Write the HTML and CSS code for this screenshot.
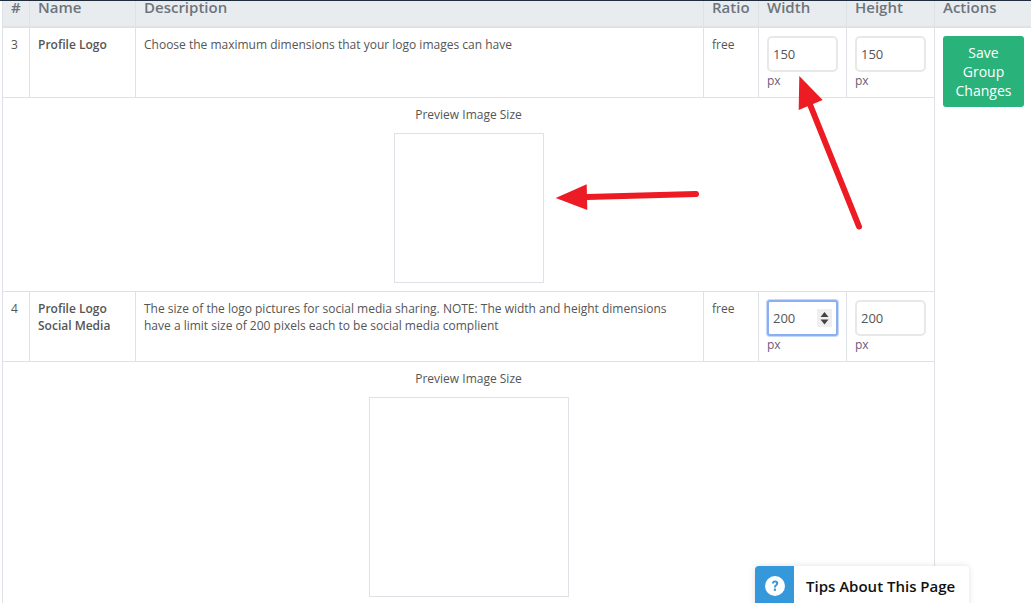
FILE: index.html
```html
<!DOCTYPE html>
<html lang="en">
<head>
<meta charset="utf-8">
<title>Image Sizes</title>
<link rel="stylesheet" href="styles.css">
</head>
<body>
<div class="page">
  <table class="sizes">
    <colgroup>
      <col class="c-num"><col class="c-name"><col class="c-desc"><col class="c-ratio"><col class="c-dim"><col class="c-dim"><col class="c-act">
    </colgroup>
    <thead>
      <tr>
        <th>#</th><th>Name</th><th>Description</th><th>Ratio</th><th>Width</th><th>Height</th><th class="act-head">Actions</th>
      </tr>
    </thead>
    <tbody>
      <tr class="row">
        <td>3</td>
        <td class="name">Profile Logo</td>
        <td>Choose the maximum dimensions that your logo images can have</td>
        <td>free</td>
        <td class="dim"><div class="field">150</div><div class="unit">px</div></td>
        <td class="dim"><div class="field">150</div><div class="unit">px</div></td>
        <td class="actions" rowspan="4"><button class="save">Save Group Changes</button></td>
      </tr>
      <tr>
        <td class="preview preview-a" colspan="6">
          <div class="preview-label">Preview Image Size</div>
          <div class="box box-a"></div>
        </td>
      </tr>
      <tr class="row">
        <td>4</td>
        <td class="name">Profile Logo Social Media</td>
        <td>The size of the logo pictures for social media sharing. NOTE: The width and height dimensions have a limit size of 200 pixels each to be social media complient</td>
        <td>free</td>
        <td class="dim">
          <div class="field focus">200
            <svg class="spin" width="15" height="18" viewBox="0 0 15 18"><rect width="15" height="18" fill="#efefef"/><path d="M7.5 3 L11.5 8 H3.5 Z M3.5 10.5 H11.5 L7.5 15.5 Z" fill="#444"/></svg>
          </div>
          <div class="unit">px</div>
        </td>
        <td class="dim"><div class="field">200</div><div class="unit">px</div></td>
      </tr>
      <tr>
        <td class="preview" colspan="6">
          <div class="preview-label">Preview Image Size</div>
          <div class="box box-b"></div>
        </td>
      </tr>
    </tbody>
  </table>
</div>

<svg class="arrows" width="1031" height="603" viewBox="0 0 1031 603">
  <path d="M587 197 L696 194" stroke="#ed1c24" stroke-width="6" stroke-linecap="round" fill="none"/>
  <path d="M555.7 198 L586.7 184.3 L587.3 210 Z" fill="#ed1c24"/>
  <path d="M809 102 L859 226.5" stroke="#ed1c24" stroke-width="6" stroke-linecap="round" fill="none"/>
  <path d="M799.3 76 L822.7 100 L798.7 110 Z" fill="#ed1c24"/>
</svg>

<div class="tips">
  <div class="tips-icon">
    <svg width="20" height="20" viewBox="0 0 20 20"><circle cx="10" cy="10" r="10" fill="#fff"/><path d="M6.9 7.6 C6.9 5.7 8.3 4.6 10.1 4.6 C12 4.6 13.3 5.7 13.3 7.3 C13.3 9.6 10.9 9.6 10.9 11.6 H8.9 C8.9 8.9 11.1 8.7 11.1 7.4 C11.1 6.8 10.7 6.4 10 6.4 C9.3 6.4 8.9 6.9 8.9 7.6 Z" fill="#3498db"/><rect x="8.8" y="12.6" width="2.2" height="2.2" fill="#3498db"/></svg>
  </div>
  <div class="tips-text">Tips About This Page</div>
</div>
</body>
</html>
```
FILE: styles.css
```css
html, body {
  margin: 0;
  padding: 0;
  height: 603px;
  overflow: hidden;
  background: #fff;
}

body {
  font-family: "Open Sans", sans-serif;
  font-size: 12px;
  line-height: 17px;
  color: #555;
  position: relative;
  border-top: 1px solid #1f2d3d;
  box-sizing: border-box;
}

.page {
  padding-left: 2px;
}

.sizes {
  width: 1029px;
  table-layout: fixed;
  border-collapse: collapse;
}

.c-num { width: 27px; }
.c-name { width: 106px; }
.c-desc { width: 568px; }
.c-ratio { width: 55px; }
.c-dim { width: 88px; }
.c-act { width: 97px; }

.sizes th {
  height: 13px;
  padding: 0 8px 12px;
  background: #e9ecef;
  color: #6c757d;
  font-size: 15px;
  font-weight: 600;
  line-height: 13px;
  text-align: left;
  border: 1px solid #dee2e6;
  border-top: 0;
  border-bottom: 2px solid #dee2e6;
  vertical-align: bottom;
}

.sizes td {
  padding: 8px;
  border: 1px solid #dee2e6;
  vertical-align: top;
}

.sizes th.act-head {
  border-right: 0;
}

.sizes td.actions {
  border-right: 0;
  border-bottom: 0;
}

.row {
  height: 70px;
}

.name {
  font-weight: 600;
}

.sizes td.dim {
  padding: 8px 8px 0;
}

.field {
  position: relative;
  box-sizing: border-box;
  width: 71px;
  height: 36px;
  padding-left: 4px;
  border: 2px solid #e8e8e8;
  border-radius: 5px;
  font-size: 13px;
  line-height: 32px;
  color: #555;
  background: #fff;
}

.focus {
  border-color: #8ab0f2;
  border-radius: 3px;
  box-shadow: 0 0 0 1px #c5d8f8;
}

.spin {
  position: absolute;
  right: 4px;
  top: 7px;
}

.unit {
  margin-top: 1px;
  color: #6b5a78;
  line-height: 16px;
}

.sizes td.preview {
  padding: 8px 8px 8px;
  height: 177px;
  text-align: center;
}

.preview-label {
  margin-bottom: 10px;
}

.box {
  display: block;
  margin: 0 auto;
  box-sizing: border-box;
  border: 1px solid #dee2e6;
}

.box-a {
  width: 150px;
  height: 150px;
}

.box-b {
  width: 200px;
  height: 200px;
}

.save {
  display: block;
  box-sizing: border-box;
  width: 81px;
  height: 71px;
  padding: 6px 8px;
  border: 0;
  border-radius: 3px;
  background: #2ab27b;
  color: #fff;
  font-family: "Open Sans", sans-serif;
  font-size: 14px;
  line-height: 19px;
  text-align: center;
}

.arrows {
  position: absolute;
  left: 0;
  top: -1px;
  pointer-events: none;
}

.tips {
  position: absolute;
  left: 755px;
  top: 565px;
  width: 214px;
  height: 50px;
  display: flex;
  border-radius: 4px;
  background: #fff;
  overflow: hidden;
  box-shadow: 0 0 6px rgba(0, 0, 0, 0.12);
}

.tips-icon {
  width: 39px;
  display: flex;
  justify-content: center;
  padding-top: 10px;
  box-sizing: border-box;
  background: #3498db;
}

.tips-text {
  padding: 9px 0 0 12px;
  font-size: 15px;
  font-weight: 600;
  line-height: 22px;
  color: #111;
}
```
